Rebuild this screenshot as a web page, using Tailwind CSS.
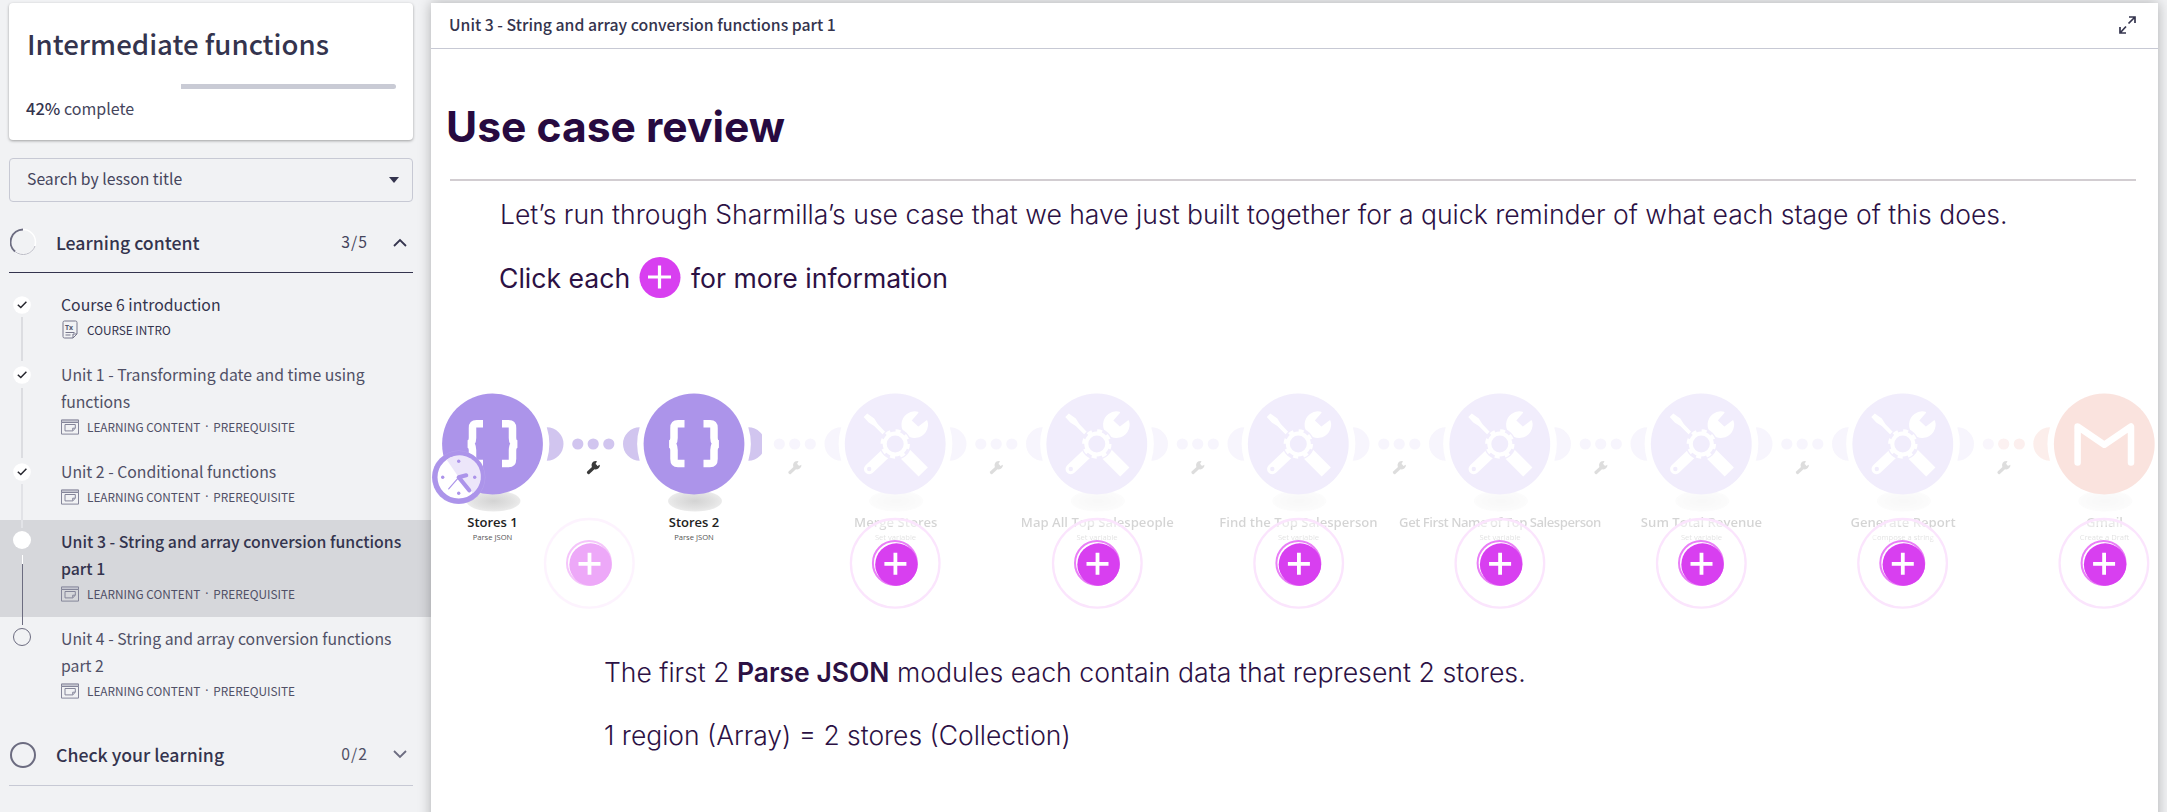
<!DOCTYPE html>
<html lang="en">
<head>
<meta charset="utf-8">
<title>Intermediate functions</title>
<script src="https://cdn.jsdelivr.net/npm/@tailwindcss/browser@4"></script>
</head>
<body class="bg-[#f1f2f4]">
<svg width="0" height="0" class="absolute">
  <defs>
    <symbol id="lesson" viewBox="0 0 18 16"><g fill="none" stroke="#85869a" stroke-width="1"><path fill="#c4c5cf" d="M.5.9h17v2.6H.5z"/><path d="M.5 3.500v11.600h17V3.500"/><path d="M4 5.500h10.300v3.800l-2.600 2.600H4z"/><path d="M14.300 9.200h-2.600v2.600"/></g></symbol>
    <symbol id="check" viewBox="0 0 18 18"><circle cx="9" cy="9" r="8.800" fill="#fff"/><path d="M4.800 8.800l3 2.700 5.600-5.700" fill="none" stroke="#26262e" stroke-width="1.500"/></symbol>
  </defs>
</svg>
<div class="flex h-[812px] w-[2167px] overflow-hidden text-[#34344e] [font-family:'Noto_Sans_CJK_SC','Noto_Sans',sans-serif]">
  <aside class="w-[431px] shrink-0 pt-[3px]">
    <section class="ml-[9px] h-[137px] w-[404px] rounded-[4px] bg-white px-[17px] pt-[20px] shadow-[0_1px_3px_rgba(0,0,0,0.35)]">
      <h2 class="h-[40px] pl-px text-[27.6px] leading-[40px] font-medium whitespace-nowrap">Intermediate functions</h2>
      <div class="mt-[21px] flex h-[5px]"><div class="w-[155px]"></div><div class="w-[215px] rounded-r-full bg-[#c9cbd5]"></div></div>
      <p class="mt-[7px] text-[16.5px] leading-[24px]"><span class="font-medium">42%</span> <span class="text-[16px] text-[#45455c]">complete</span></p>
    </section>
    <div class="mt-[18px] ml-[9px] flex h-[44px] w-[404px] items-center justify-between rounded-[4px] border border-[#c7c9d4] pr-[13px] pl-[17px]">
      <span class="-mt-[3px] text-[15.75px] leading-[24px] text-[#45455c]">Search by lesson title</span>
      <svg width="10" height="6" viewBox="0 0 10 6"><path d="M0 0h10L5 6z" fill="#34344e"/></svg>
    </div>
    <div class="ml-[9px] flex h-[71px] w-[404px] items-center border-b border-[#34344e] pt-[10px]">
      <svg class="ml-px" width="27" height="28" viewBox="0 0 27 28" fill="none"><circle cx="13" cy="14" r="12.500" stroke="#fff" stroke-width="1.500"/><path d="M13 1.500A12.500 12.500 0 0 0 5 23.500" stroke="#6c6c80" stroke-width="2"/><path d="M5 23.500A12.500 12.500 0 0 0 25 18" stroke="#b9bac4" stroke-width="1"/></svg>
      <span class="-mt-px ml-[19px] text-[17.7px] leading-[26px] font-medium">Learning content</span>
      <span class="-mt-px ml-auto text-[15.75px] leading-[24px] tracking-[1px] text-[#45455c]">3/5</span>
      <svg class="mr-[6px] ml-[25px]" width="14" height="9" viewBox="0 0 14 9"><path d="M1 8l6-6 6 6" fill="none" stroke="#34344e" stroke-width="1.800"/></svg>
    </div>
    <ul class="pt-[10px] text-[15.8px] leading-[27px]">
      <li class="flex h-[70px] pt-[8px] pl-[13px]">
        <div class="mt-[5px] flex h-0 w-[18px] flex-col items-center"><svg class="h-[18px] w-[18px] shrink-0"><use href="#check"/></svg><i class="mt-[3px] h-[44px] w-[2px] shrink-0 bg-[#dcdde1]"></i></div>
        <div class="ml-[30px]"><p>Course 6 introduction</p>
          <p class="flex items-center text-[11.8px] leading-[23px]"><svg class="mr-[9px] ml-px" width="16" height="19" viewBox="0 0 16 19" fill="none" stroke="#77778c"><path d="M2.500 1h11q1.500 0 1.500 1.500V14l-4 4H2.500Q1 18 1 16.500v-14Q1 1 2.500 1zM15 14h-4v4M3.500 12.500h9M3.500 15h5"/><text x="3" y="10" font-size="7" font-weight="700" font-family="Noto Sans" fill="#555a70" stroke="none">Tx</text></svg>COURSE INTRO</p></div>
      </li>
      <li class="flex h-[97px] pt-[8px] pl-[13px]">
        <div class="mt-[5px] flex h-0 w-[18px] flex-col items-center"><svg class="h-[18px] w-[18px] shrink-0"><use href="#check"/></svg><i class="mt-[4px] h-[70px] w-[2px] shrink-0 bg-[#dcdde1]"></i></div>
        <div class="ml-[30px] text-[#505066]"><p>Unit 1 - Transforming date and time using<br>functions</p>
          <p class="flex items-center text-[11.8px] leading-[23px]"><svg class="mr-[8px] h-[16px] w-[18px]"><use href="#lesson"/></svg>LEARNING CONTENT<span class="w-[13px] text-center [font-family:'Noto_Sans']">·</span>PREREQUISITE</p></div>
      </li>
      <li class="flex h-[70px] pt-[8px] pl-[13px]">
        <div class="relative mt-[5px] flex h-0 w-[18px] flex-col items-center"><svg class="h-[18px] w-[18px] shrink-0"><use href="#check"/></svg><i class="z-10 mt-[3px] h-[44px] w-[2px] shrink-0 bg-[#e2e3e7]"></i></div>
        <div class="ml-[30px] text-[#505066]"><p>Unit 2 - Conditional functions</p>
          <p class="flex items-center text-[11.8px] leading-[23px]"><svg class="mr-[8px] h-[16px] w-[18px]"><use href="#lesson"/></svg>LEARNING CONTENT<span class="w-[13px] text-center [font-family:'Noto_Sans']">·</span>PREREQUISITE</p></div>
      </li>
      <li class="flex h-[97px] bg-[#d6d7db] pt-[8px] pl-[13px]">
        <div class="relative z-10 mt-[3px] flex h-0 w-[18px] flex-col items-center"><i class="h-[18px] w-[18px] shrink-0 rounded-full bg-white"></i><i class="mt-[6px] h-[9px] w-[1px] shrink-0 bg-white"></i><i class="h-[61px] w-[1px] shrink-0 bg-[#6c6c80]"></i></div>
        <div class="ml-[30px]"><p class="text-[15.85px] font-medium whitespace-nowrap">Unit 3 - String and array conversion functions<br>part 1</p>
          <p class="flex items-center text-[11.8px] leading-[23px] text-[#505066]"><svg class="mr-[8px] h-[16px] w-[18px]"><use href="#lesson"/></svg>LEARNING CONTENT<span class="w-[13px] text-center [font-family:'Noto_Sans']">·</span>PREREQUISITE</p></div>
      </li>
      <li class="flex h-[97px] pt-[8px] pl-[13px]">
        <div class="mt-[3px] flex h-0 w-[18px] flex-col items-center"><i class="h-[18px] w-[18px] shrink-0 rounded-full border border-[#6c6c80]"></i></div>
        <div class="ml-[30px] text-[#505066]"><p class="whitespace-nowrap">Unit 4 - String and array conversion functions<br>part 2</p>
          <p class="flex items-center text-[11.8px] leading-[23px]"><svg class="mr-[8px] h-[16px] w-[18px]"><use href="#lesson"/></svg>LEARNING CONTENT<span class="w-[13px] text-center [font-family:'Noto_Sans']">·</span>PREREQUISITE</p></div>
      </li>
    </ul>
    <div class="ml-[9px] flex h-[72px] w-[404px] items-center border-b border-[#c7c9d4] pt-[10px]">
      <i class="ml-px h-[26px] w-[26px] rounded-full border-2 border-[#6c6c80]"></i>
      <span class="-mt-px ml-[20px] text-[17.7px] leading-[26px] font-medium">Check your learning</span>
      <span class="-mt-px ml-auto text-[15.75px] leading-[24px] tracking-[1px] text-[#505066]">0/2</span>
      <svg class="mr-[6px] ml-[25px]" width="14" height="9" viewBox="0 0 14 9"><path d="M1 1l6 6 6-6" fill="none" stroke="#6c6c80" stroke-width="1.800"/></svg>
    </div>
  </aside>

  <main class="mt-[3px] h-[830px] w-[1727px] shrink-0 bg-white shadow-[0_0_12px_rgba(0,0,0,0.28)] [clip-path:inset(-3px_-9px_0_-14px)]">
    <header class="flex h-[46px] items-center justify-between border-b border-[#c7c9d4] pr-[22px] pl-[18px]">
      <span class="-mt-[1px] text-[15.8px] leading-[24px] font-medium">Unit 3 - String and array conversion functions part 1</span>
      <svg class="-mt-[2px]" width="17" height="18" viewBox="0 0 17 18" fill="none" stroke="#34344e" stroke-width="1.700"><path d="M9.500 7.500L16 1M10 1h6v6M7 10.500L1 17M1 11v6h6"/></svg>
    </header>
    <div class="text-[#2c1144] [font-family:Inter,sans-serif]">
      <h1 class="ml-[15px] pt-[48px] text-[42.600px] leading-[60px] font-bold text-[#270a40]">Use case review</h1>
      <div class="mt-[22px] ml-[19px] h-[2px] w-[1686px] bg-[#d2cdd1]"></div>
      <p class="mt-[17px] ml-[69px] text-[26.55px] leading-[32px] font-light whitespace-nowrap">Let’s run through Sharmilla’s use case that we have just built together for a quick reminder of what each stage of this does.</p>
      <div class="mt-[27px] ml-[68px] flex h-[42px] items-center text-[26.600px] leading-[32px]">
        <span class="w-[140px]">Click each</span>
        <svg width="42" height="42" viewBox="0 0 42 42"><circle cx="21" cy="20.500" r="20.500" fill="#d83ff0"/><path d="M9 20h23M20.500 8.500v23" stroke="#fff" stroke-width="3.200"/></svg>
        <span class="ml-[10px]">for more information</span>
      </div>
      <svg class="mt-[81px] block" width="1727" height="240" viewBox="431 380 1727 240">
        <defs>
          <radialGradient id="floor"><stop offset="0" stop-color="#d3d3d3"/><stop offset=".7" stop-color="#e2e2e2"/><stop offset="1" stop-color="#ebebeb"/></radialGradient>
          <clipPath id="active"><path d="M431 380h331v240H431z"/></clipPath>
          <path id="lobe" d="M54.300-16.700A16.700 16.700 0 0 1 54.300 16.700A56.800 56.800 0 0 0 54.300-16.700z"/>
          <g id="spanner"><path d="M-5 5L2-1.500" stroke="#3a3a3a" stroke-width="3.200" stroke-linecap="round"/><path d="M3.500-6.300A4.200 4.200 0 1 0 6.400-2.700L3.800-1.400 2-3.400z" fill="#3a3a3a"/></g>
          <g id="dots"><circle cx="85.300" r="5.600"/><circle cx="100.700" r="5.600"/><circle cx="116.300" r="5.600"/></g>
          <g id="json">
            <ellipse cx="1" cy="57" rx="27" ry="10.500" fill="url(#floor)"/>
            <circle r="50.400" fill="#ac94ea"/>
            <g fill="none" stroke="#fff" stroke-width="7.500"><path id="brace" d="M-9.500-20.300H-16Q-20-20.300-20-16V-6Q-20-1-24 0Q-20 1-20 6V15Q-20 19.500-16 19.500H-9.500"/><use href="#brace" transform="scale(-1 1)"/></g>
          </g>
          <g id="tools">
            <ellipse cx="1" cy="57" rx="27" ry="10.500" fill="url(#floor)"/>
            <circle r="50.400" fill="#ac94ea"/>
            <g fill="#fff">
              <path d="M-31.500-27L-28-30.500-21-25.500-17.500-20-9-11-11.500-8.500-21-18-26.500-21.500z"/>
              <path d="M-8 8L-26 25" stroke="#fff" stroke-width="10.500" stroke-linecap="round"/>
              <path d="M7 7L28 28" stroke="#fff" stroke-width="13"/>
              <path d="M22.500-31.500A12.500 12.500 0 1 0 31.500-23L23-16.500 15.500-23.500z" stroke="#fff" stroke-width="1.500" stroke-linejoin="round"/>
            </g>
            <circle r="16" fill="#ac94ea"/>
            <circle r="10.500" fill="none" stroke="#fff" stroke-width="4"/>
            <circle r="13.200" fill="none" stroke="#fff" stroke-width="3" stroke-dasharray="5 5.367" />
            <circle cx="-26" cy="25" r="2.200" fill="#ac94ea"/>
          </g>
          <g id="links" fill="#d1c5ef"><use href="#lobe"/><use href="#dots"/></g>
          <g id="hotspot">
            <circle r="41" fill="none" stroke="#fff" stroke-width="6" opacity=".45"/>
            <circle r="44.300" fill="#fff" fill-opacity=".1" stroke="#fbe5fd" stroke-width="2.300"/>
            <circle cx="-.3" cy="-.3" r="22" fill="#fff" stroke="#e97ff7" stroke-width="2"/>
            <circle cx="1.200" cy="1.200" r="21.200" fill="#d83ff0"/>
            <path d="M-10.800.5h22M.2-10.500v22" stroke="#fff" stroke-width="3.800"/>
          </g>
        </defs>
        <g clip-path="url(#active)">
          <use href="#json" x="492.500" y="444"/><use href="#links" x="492.500" y="444"/><use href="#spanner" x="593.500" y="467.500"/>
          <use href="#json" x="694" y="444"/><use href="#links" x="694" y="444"/>
          <use href="#lobe" transform="translate(694 444) scale(-1 1)" fill="#d1c5ef"/>
          <g transform="translate(458.700 477.300)" stroke-linecap="round">
            <circle r="26.700" fill="#b6a1ed"/><circle r="23.700" fill="#fff" stroke="#ac94ea" stroke-width="5"/>
            <path d="M0 0L-12-17.500A21.200 21.200 0 0 1 14 16z" fill="#ece6fa"/>
            <path d="M10.500 13L0 0L7.500-2" fill="none" stroke="#ac94ea" stroke-width="4.200" stroke-linejoin="round"/><path d="M0 0L-10 11.500" stroke="#ac94ea" stroke-width="1.200"/>
            <g fill="#ac94ea"><circle cy="-16" r="1.700"/><circle cy="16" r="1.700"/><circle cx="16" r="1.700"/><circle cx="-16" r="1.700"/></g>
          </g>
          <g text-anchor="middle" font-family="Open Sans" fill="#222">
            <text x="492.500" y="526.500" font-size="13" font-weight="600">Stores 1</text><text x="694" y="526.500" font-size="13" font-weight="600">Stores 2</text>
            <text x="492.500" y="540.300" font-size="7.600" fill="#555">Parse JSON</text><text x="694" y="540.300" font-size="7.600" fill="#555">Parse JSON</text>
          </g>
        </g>
        <g opacity=".17">
          <use href="#dots" x="694" y="444" fill="#d1c5ef"/>
          <g fill="#d1c5ef">
            <use href="#lobe" transform="translate(895.500 444) scale(-1 1)"/><use href="#lobe" transform="translate(1097 444) scale(-1 1)"/><use href="#lobe" transform="translate(1298.500 444) scale(-1 1)"/><use href="#lobe" transform="translate(1500 444) scale(-1 1)"/><use href="#lobe" transform="translate(1701.500 444) scale(-1 1)"/><use href="#lobe" transform="translate(1903 444) scale(-1 1)"/>
          </g>
          <use href="#tools" x="895.200" y="444"/><use href="#tools" x="1096.800" y="444"/><use href="#tools" x="1298.300" y="444"/><use href="#tools" x="1499.800" y="444"/><use href="#tools" x="1701.300" y="444"/><use href="#tools" x="1902.800" y="444"/>
          <use href="#links" x="895.500" y="444"/><use href="#links" x="1097" y="444"/><use href="#links" x="1298.500" y="444"/><use href="#links" x="1500" y="444"/><use href="#links" x="1701.500" y="444"/>
          <use href="#lobe" x="1903" y="444" fill="#d1c5ef"/><circle cx="1988.300" cy="444" r="5.600" fill="#dccbea"/><circle cx="2003.700" cy="444" r="5.600" fill="#eda9a9"/><circle cx="2019.300" cy="444" r="5.600" fill="#eda199"/>
          <use href="#lobe" transform="translate(2104.300 444) scale(-1 1)" fill="#ee9c88"/>
          <use href="#spanner" x="795" y="467.500"/><use href="#spanner" x="996.500" y="467.500"/><use href="#spanner" x="1198" y="467.500"/><use href="#spanner" x="1399.500" y="467.500"/><use href="#spanner" x="1601" y="467.500"/><use href="#spanner" x="1802.500" y="467.500"/><use href="#spanner" x="2004" y="467.500"/>
          <g transform="translate(2104.300 444)"><ellipse cx="1" cy="57" rx="27" ry="10.500" fill="url(#floor)"/><circle r="50.400" fill="#e15a3d"/><path d="M-26.700 18.500V-17.500L0 .8L26.700-17.500V18.500" fill="none" stroke="#fff" stroke-width="6.500" stroke-linejoin="round" stroke-linecap="round"/></g>
          <g text-anchor="middle" font-family="Open Sans" font-size="13.100" font-weight="600" fill="#000">
            <text x="895.800" y="526.500">Merge Stores</text><text x="1097.300" y="526.500">Map All Top Salespeople</text><text x="1298.500" y="526.500">Find the Top Salesperson</text><text x="1500" y="526.500" letter-spacing="-.48">Get First Name of Top Salesperson</text><text x="1701.500" y="526.500">Sum Total Revenue</text><text x="1903" y="526.500">Generate Report</text><text x="2104.500" y="526.500">Gmail</text>
          </g>
          <g text-anchor="middle" font-family="Open Sans" font-size="7.600" fill="#444">
            <text x="895.500" y="540.300">Set variable</text><text x="1097" y="540.300">Set variable</text><text x="1298.500" y="540.300">Set variable</text><text x="1500" y="540.300">Set variable</text><text x="1701.500" y="540.300">Set variable</text><text x="1903" y="540.300">Compose a string</text><text x="2104.500" y="540.300">Create a Draft</text>
          </g>
        </g>
        <use href="#hotspot" x="589.300" y="563.300" opacity=".45"/>
        <use href="#hotspot" x="895.200" y="563.300"/><use href="#hotspot" x="1097.300" y="563.300"/><use href="#hotspot" x="1298.700" y="563.300"/><use href="#hotspot" x="1499.900" y="563.300"/><use href="#hotspot" x="1701.300" y="563.300"/><use href="#hotspot" x="1902.600" y="563.300"/><use href="#hotspot" x="2103.900" y="563.300"/>
      </svg>
      <p class="mt-[36px] ml-[173px] text-[26.500px] leading-[32px] font-light whitespace-nowrap">The first 2 <b class="font-semibold">Parse JSON</b> <span class="text-[26.700px]">modules each contain data that represent 2 stores.</span></p>
      <p class="mt-[31px] ml-[173px] text-[26.450px] leading-[32px] font-light whitespace-nowrap">1 region (Array) = 2 stores (Collection)</p>
    </div>
  </main>
</div>
</body>
</html>
